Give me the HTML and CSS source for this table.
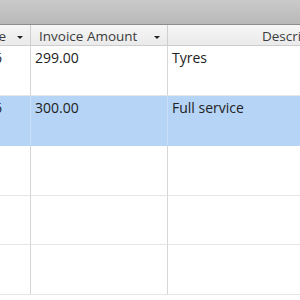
FILE: index.html
```html
<!DOCTYPE html>
<html>
<head>
<meta charset="utf-8">
<link rel="stylesheet" href="styles.css">
</head>
<body>
<div class="topbar"></div>
<div class="sheet">
  <div class="hcell c0"><span class="htext">Invoice Date</span><span class="arrow"></span></div>
  <div class="hcell c1"><span class="htext">Invoice Amount</span><span class="arrow"></span></div>
  <div class="hcell c2 center"><span class="htext">Description</span></div>

  <div class="cell c0 date">12/03/2016</div>
  <div class="cell c1">299.00</div>
  <div class="cell c2">Tyres</div>

  <div class="cell c0 date sel">18/03/2016</div>
  <div class="cell c1 sel">300.00</div>
  <div class="cell c2 sel">Full service</div>

  <div class="cell c0"></div>
  <div class="cell c1"></div>
  <div class="cell c2"></div>

  <div class="cell c0"></div>
  <div class="cell c1"></div>
  <div class="cell c2"></div>

  <div class="cell c0"></div>
  <div class="cell c1"></div>
  <div class="cell c2"></div>
</div>
</body>
</html>
```
FILE: styles.css
```css
html, body {
  margin: 0;
  padding: 0;
  width: 300px;
  height: 300px;
  overflow: hidden;
  background: #ffffff;
  font-family: "Open Sans", "Noto Sans", sans-serif;
}
.topbar {
  height: 24px;
  background: linear-gradient(#cacaca, #b9b9b9);
  border-bottom: 1px solid #8c8c8c;
}
.sheet {
  display: grid;
  grid-template-columns: 31px 137px 260px;
  grid-template-rows: 21px 50px 50px 50px 49px 50px;
  width: 428px;
}
.hcell {
  background: linear-gradient(#f6f6f6, #eaeaea);
  border-bottom: 1px solid #cdcdcd;
  border-right: 1px solid #cfcfcf;
  display: flex;
  align-items: center;
  font-size: 13.5px;
  color: #3c3c3c;
  overflow: hidden;
  white-space: nowrap;
  padding: 3px 7px 0 8px;
}
.hcell.c0 {
  justify-content: flex-end;
  padding-left: 0;
  gap: 11px;
}
.hcell.c1 {
  justify-content: space-between;
}
.hcell.center {
  justify-content: center;
  padding-left: 0;
  padding-right: 0;
  border-right: none;
}
.htext {
  flex: none;
  line-height: 1;
}
.arrow {
  flex: none;
  width: 0;
  height: 0;
  border-left: 3px solid transparent;
  border-right: 3px solid transparent;
  border-top: 3px solid #222222;
  margin-top: 1px;
}
.cell {
  border-right: 1px solid #d6d6d6;
  border-bottom: 1px solid #e6e6e6;
  font-size: 14px;
  line-height: 20px;
  color: #222222;
  padding: 2px 0 0 4px;
  white-space: nowrap;
  overflow: hidden;
}
.cell.c2 {
  border-right: none;
}
.cell.date {
  display: flex;
  justify-content: flex-end;
  padding-left: 0;
  padding-right: 28px;
}
.cell.sel {
  background: #b5d4f6;
  border-right-color: #c9dff6;
  border-bottom-color: #b5d4f6;
}
```
